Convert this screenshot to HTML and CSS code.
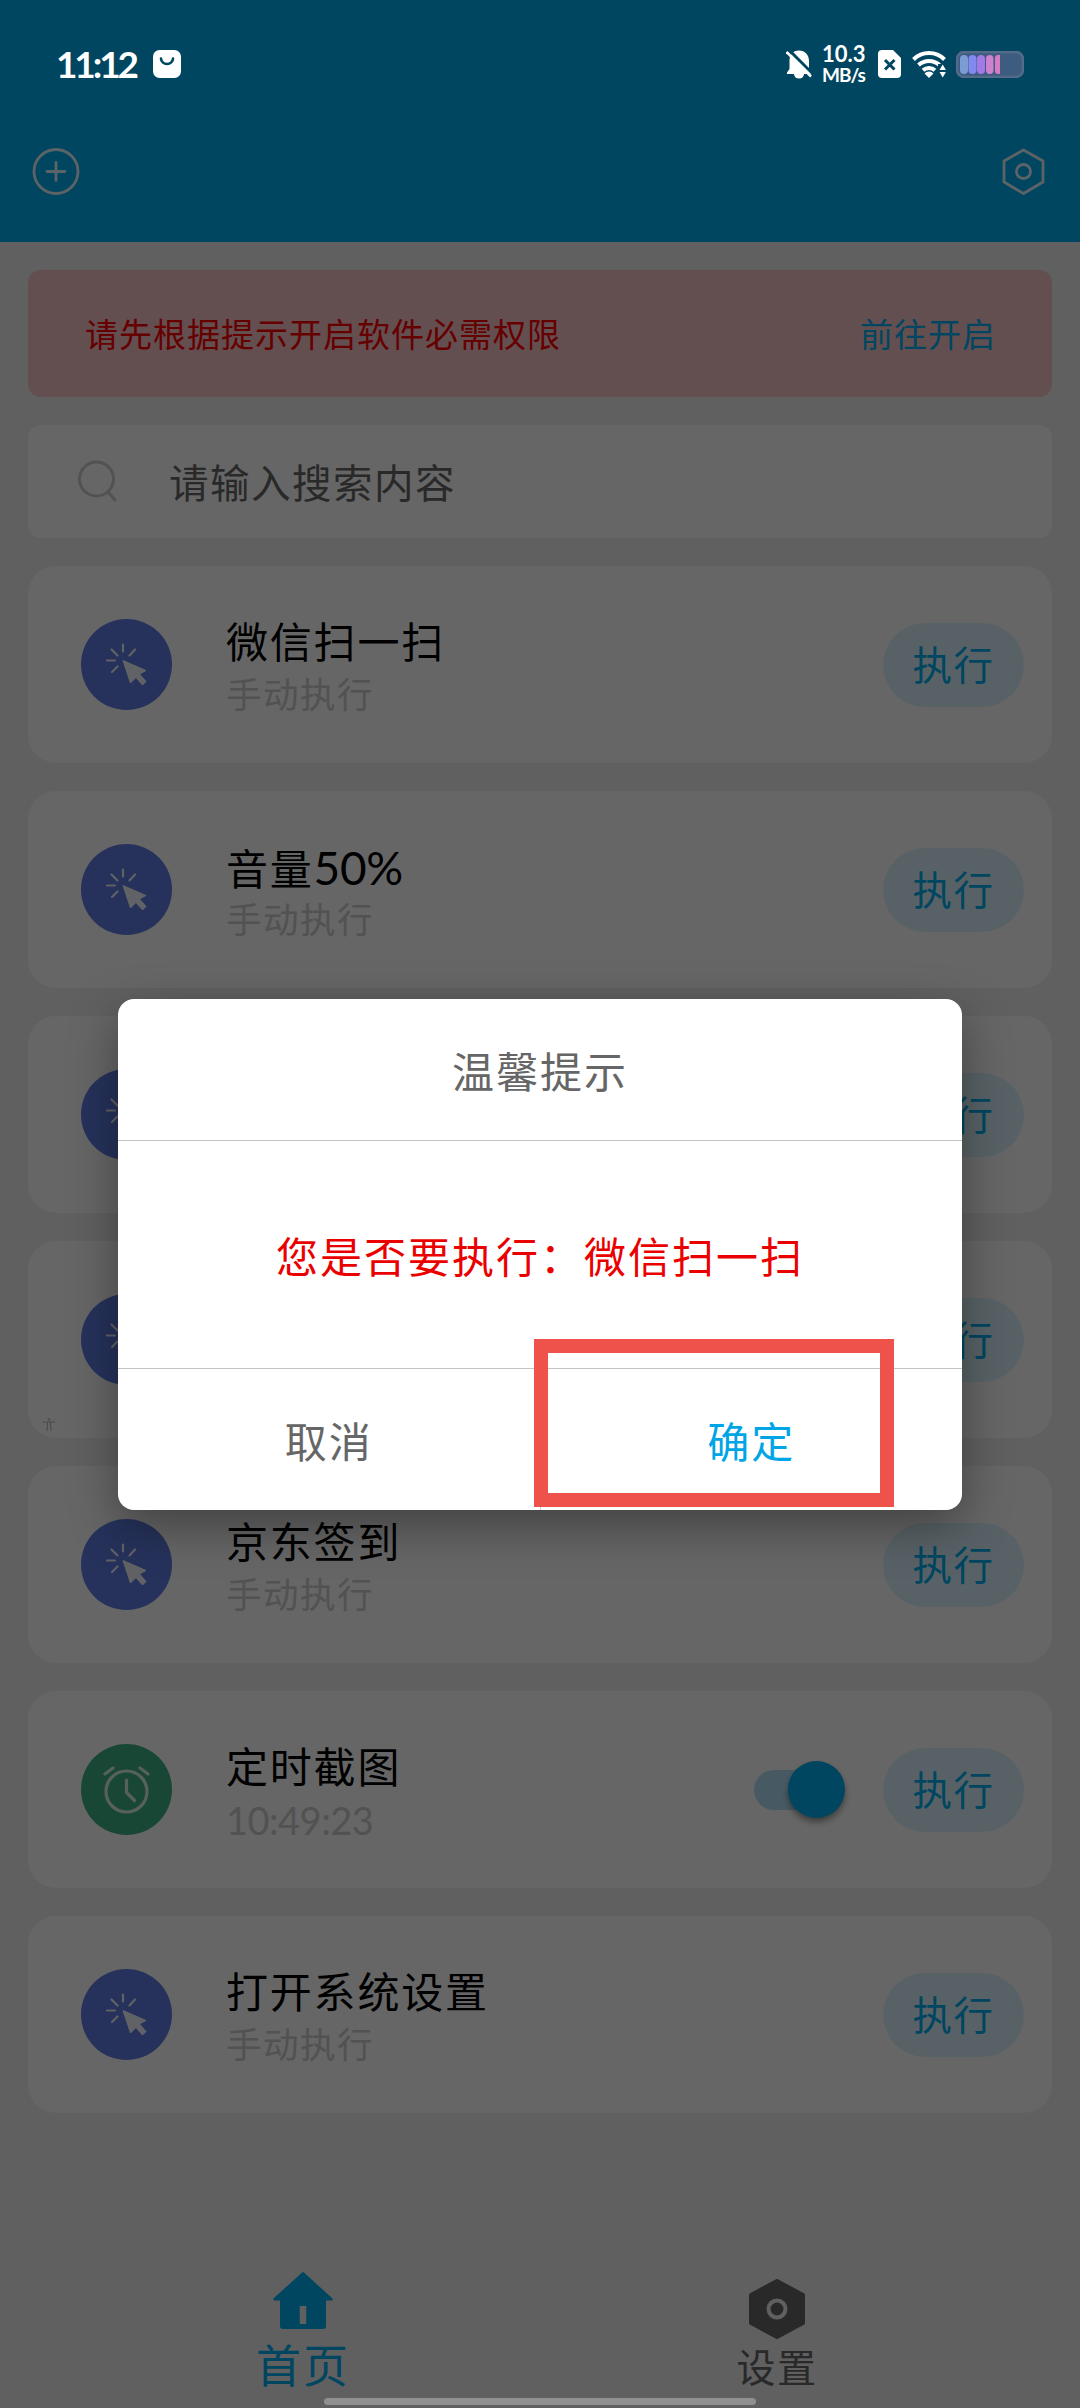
FILE: index.html
```html
<!DOCTYPE html>
<html lang="zh-CN">
<head>
<meta charset="utf-8">
<title>首页</title>
<link rel="stylesheet" href="styles.css">
</head>
<body>
<svg width="0" height="0" class="defs">
  <symbol id="click" viewBox="0 0 91 91">
    <circle cx="45.500" cy="45.500" r="45.500" fill="#5f7de4"/>
    <g stroke="#fff" stroke-opacity=".9" stroke-width="2.200" stroke-linecap="round">
      <path d="M42 25.500v7M30.500 30.500l6 6M54 30.500l-5.500 6M26 41.500h8M36.500 47.500l-5.500 5.500"/>
    </g>
    <path d="M42 41.500L65 51.500 58.500 55 65 62.500 61.500 66 55 58.500 49.500 64z" fill="#fff" fill-opacity=".92" stroke="#fff" stroke-opacity=".9" stroke-width="1" stroke-linejoin="round"/>
  </symbol>
</svg>
<div class="screen">
  <header class="top">
    <svg width="48" height="48" viewBox="0 0 48 48" fill="none" stroke="#fff" stroke-opacity=".9" stroke-width="2.800" stroke-linecap="round"><circle cx="24" cy="24.500" r="22"/><path d="M24 15.500v18M15 24.500h18"/></svg>
    <svg width="48" height="48" viewBox="0 0 48 48" fill="none" stroke="#fff" stroke-opacity=".9" stroke-width="2.800" stroke-linejoin="round"><path d="M23.500 3L43 14V35L23.500 46.500 4 35V14z"/><circle cx="23.500" cy="24.500" r="7"/></svg>
  </header>
  <main class="content">
    <div class="banner"><span class="warn">请先根据提示开启软件必需权限</span><a class="go">前往开启</a></div>
    <div class="search">
      <svg width="44" height="44" viewBox="0 0 44 44" fill="none" stroke="#ccc" stroke-width="3" stroke-linecap="round"><circle cx="20.500" cy="20" r="17"/><path d="M32 33l7 8"/></svg>
      <span>请输入搜索内容</span>
    </div>
    <div class="card"><svg class="ico"><use href="#click"/></svg><div class="txt"><b>微信扫一扫</b><i>手动执行</i></div><span class="run">执行</span></div>
    <div class="card"><svg class="ico"><use href="#click"/></svg><div class="txt"><b>音量<span class="num">50%</span></b><i>手动执行</i></div><span class="run">执行</span></div>
    <div class="card"><svg class="ico"><use href="#click"/></svg><div class="txt"></div><span class="run">执行</span></div>
    <div class="card"><svg class="ico"><use href="#click"/></svg><div class="txt"></div><span class="run">执行</span></div>
    <div class="card"><svg class="ico"><use href="#click"/></svg><div class="txt"><b>京东签到</b><i>手动执行</i></div><span class="run">执行</span></div>
    <div class="card">
      <svg class="ico" viewBox="0 0 91 91"><circle cx="45.500" cy="45.500" r="45.500" fill="#40b284"/><g fill="none" stroke="#fff" stroke-opacity=".8" stroke-width="3.200" stroke-linecap="round" stroke-linejoin="round"><circle cx="45.500" cy="47.500" r="20.500"/><path d="M45.500 36v12.500l8 8M24 30l8-6M67 30l-8-6"/></g></svg>
      <div class="txt"><b>定时截图</b><i class="time">10:49:23</i></div>
      <span class="switch"><span class="thumb"></span></span>
      <span class="run">执行</span>
    </div>
    <div class="card"><svg class="ico"><use href="#click"/></svg><div class="txt"><b>打开系统设置</b><i>手动执行</i></div><span class="run">执行</span></div>
  </main>
  <nav class="tabs">
    <div class="tab home">
      <svg width="60" height="58" viewBox="0 0 60 58"><path d="M30 0Q31 0 32 1.500L59 26Q61 28.500 58 28.500H53V54Q53 57 50 57H10Q7 57 7 54V28.500H2Q-1 28.500 1 26L28 1.500Q29 0 30 0z" fill="#00aeef"/><path d="M30 34v18" stroke="#f0f0f0" stroke-width="6.500"/></svg>
      <span>首页</span>
    </div>
    <div class="tab set">
      <svg width="58" height="62" viewBox="0 0 58 62"><path d="M29 3L55 17V45L29 59 3 45V17z" fill="#666" stroke="#666" stroke-width="4" stroke-linejoin="round"/><circle cx="29" cy="31" r="8.500" fill="none" stroke="#f0f0f0" stroke-width="4"/></svg>
      <span>设置</span>
    </div>
  </nav>
</div>
<div class="scrim">
  <section class="dialog">
    <h2>温馨提示</h2>
    <p>您是否要执行：微信扫一扫</p>
    <div class="actions"><span class="cancel">取消</span><span class="ok">确定</span></div>
  </section>
</div>
<div class="mark"></div>
<svg class="person" width="12" height="14" viewBox="0 0 12 14" fill="none" stroke="#484848" stroke-width="1"><circle cx="6" cy="1.500" r=".8"/><path d="M0 4h12M4.500 4.500L4 13M7.500 4.500L8 13"/></svg>
<div class="status">
  <span class="clock">11:12</span>
  <svg class="bag" width="28" height="28" viewBox="0 0 28 28"><rect width="28" height="28" rx="6.500" fill="#fff"/><path d="M8 8.500a6 5.500 0 0 0 12 0" fill="none" stroke="#004660" stroke-width="2.600" stroke-linecap="round"/></svg>
  <svg class="bell" width="26" height="29" viewBox="0 0 26 29"><path d="M13 .5C19 .5 23 5 23 11v8l2 3.500V24H1v-1.500L3.500 19v-8C3.500 5 7 .5 13 .5z" fill="#fff"/><path d="M8 24a5 4.500 0 0 0 10 0z" fill="#fff"/><path d="M2 -1L28 25" stroke="#004660" stroke-width="3"/><path d="M.5 2L25 26.500" stroke="#fff" stroke-width="2.500"/></svg>
  <span class="speed"><span>10.3</span><span>MB/s</span></span>
  <svg class="sim" width="23" height="28" viewBox="0 0 23 28"><path d="M4 0H15L23 8V24a4 4 0 0 1-4 4H4a4 4 0 0 1-4-4V4a4 4 0 0 1 4-4z" fill="#fff"/><path d="M7 10l9.500 9.500M16.500 10L7 19.500" stroke="#004660" stroke-width="3"/></svg>
  <svg class="wifi" width="35" height="28" viewBox="0 0 35 28" fill="none" stroke="#fff" stroke-width="4"><path d="M1.500 9.500a22 22 0 0 1 31 0M6.500 15a15.500 15.500 0 0 1 21 0M11 20.200a9 9 0 0 1 12 0"/><path d="M12.500 23.500a6 6 0 0 1 9 0L17 28z" fill="#fff" stroke="none"/><path d="M26 14h9v14h-9z" fill="#004660" stroke="none"/><path d="M27.500 20l3.200-5.500 3.200 5.500zM27.500 22h6.400l-3.200 5.500z" fill="#fff" stroke="none"/></svg>
  <svg class="battery" width="68" height="27" viewBox="0 0 68 27"><rect x="1" y="1" width="66" height="25" rx="7" fill="#3d5c80" stroke="#546b89" stroke-width="2.500"/><rect x="4" y="4" width="8" height="19" rx="4" fill="#7c9cd6"/><rect x="12.500" y="4" width="8" height="19" rx="4" fill="#8289ef"/><rect x="21" y="4" width="8" height="19" rx="4" fill="#a379e8"/><rect x="30" y="4" width="7.500" height="19" rx="3.700" fill="#cc82ce"/><path d="M44 4h-2a3 3 0 0 0-3 3v13a3 3 0 0 0 3 3h2z" fill="#d97bc0"/></svg>
</div>
<div class="gesture"></div>
</body>
</html>
```
FILE: styles.css
```css
* { box-sizing: border-box; margin: 0; padding: 0; }
body {
  position: relative;
  width: 1080px;
  height: 2408px;
  overflow: hidden;
  background: #f0f0f0;
  font-family: Lato, "Noto Sans CJK SC", sans-serif;
}
.defs { position: absolute; }
.screen { display: flex; flex-direction: column; height: 2408px; }
.top {
  flex: none;
  height: 242px;
  padding: 147px 32px 0;
  display: flex;
  justify-content: space-between;
  background: #00aeef;
}
.content { flex: 1; display: flex; flex-direction: column; gap: 28px; padding: 28px; }
.banner {
  flex: none;
  height: 127px;
  padding: 0 57px;
  display: flex;
  align-items: center;
  justify-content: space-between;
  border-radius: 13px;
  background: #f8c2c8;
  font-size: 33px;
  line-height: 50px;
}
.warn { color: #ff0000; letter-spacing: 1px; }
.go { color: #00aeef; letter-spacing: 1px; margin-right: -1px; }
.search {
  flex: none;
  height: 113px;
  padding: 0 0 2px 48px;
  display: flex;
  align-items: center;
  gap: 49px;
  border-radius: 13px;
  background: #fff;
  color: #666;
  font-size: 39.5px;
  letter-spacing: 1.5px;
}
.card {
  flex: none;
  height: 197px;
  padding: 0 28px 0 53px;
  display: flex;
  align-items: center;
  border-radius: 28px;
  background: #fff;
}
.ico { flex: none; width: 91px; height: 91px; }
.txt { flex: 1; padding: 6px 0 0 54px; display: flex; flex-direction: column; }
.txt b { height: 55px; font-weight: 400; font-size: 42px; line-height: 55px; letter-spacing: 1.8px; color: #000; }
.txt i { height: 50px; font-style: normal; font-size: 35.5px; line-height: 50px; letter-spacing: 1.5px; color: #ccc; }
.txt .time { font-size: 38px; letter-spacing: -0.5px; }
.num { font-size: 46px; letter-spacing: -0.3px; }
.run {
  width: 141px;
  height: 84px;
  border-radius: 42px;
  background: #dcf5ff;
  color: #00aeef;
  font-size: 39.5px;
  line-height: 83px;
  letter-spacing: 1.5px;
  text-align: center;
}
.switch {
  width: 84px;
  height: 40px;
  margin-right: 45px;
  display: flex;
  align-items: center;
  justify-content: flex-end;
  border-radius: 20px;
  background: #b2e1f8;
}
.thumb {
  flex: none;
  width: 57px;
  height: 57px;
  margin-right: -7px;
  border-radius: 50%;
  background: #00aeef;
  box-shadow: 0 4px 6px rgba(0,0,0,.4);
}
.tabs {
  flex: none;
  height: 156px;
  padding: 0 66px;
  display: flex;
  border-top: 1px solid #ececec;
}
.tab { flex: 1; display: flex; flex-direction: column; align-items: center; color: #666; }
.home { padding-top: 19px; color: #00aeef; font-size: 45px; line-height: 72px; letter-spacing: 2px; }
.set { padding-top: 25px; font-size: 39px; line-height: 54px; letter-spacing: 1.5px; }
.scrim {
  position: absolute;
  inset: 0;
  padding: 999px 118px 0;
  background: rgba(0,0,0,.6);
}
.dialog {
  height: 511px;
  border-radius: 16px;
  overflow: hidden;
  display: flex;
  flex-direction: column;
  background: #fff;
  box-shadow: 0 16px 48px rgba(0,0,0,.36);
  font-size: 42px;
  letter-spacing: 2px;
  text-align: center;
  color: #666;
}
.dialog h2 { height: 142px; line-height: 146px; font-size: 42px; font-weight: 400; border-bottom: 1px solid #c4c4c4; }
.dialog p { height: 228px; line-height: 232px; color: #eb0000; border-bottom: 1px solid #c4c4c4; }
.actions { flex: 1; display: flex; line-height: 146px; }
.actions span { flex: 1; }
.cancel { border-right: 1px solid #ccc; }
.ok { color: #00a5e6; }
.mark {
  position: absolute;
  left: 534px;
  top: 1339px;
  width: 360px;
  height: 168px;
  border: 14px solid #ef514b;
}
.person { position: absolute; left: 43px; top: 1418px; }
.status {
  position: absolute;
  inset: 0 0 auto 0;
  height: 128px;
  padding: 0 56px;
  display: flex;
  align-items: center;
  color: #fff;
  font-weight: 700;
}
.clock { width: 97px; font-size: 37px; line-height: 44px; letter-spacing: -3.1px; }
.bell { margin-left: auto; margin-right: 10px; }
.speed { width: 43px; margin-right: 13px; display: flex; flex-direction: column; font-size: 22px; line-height: 21px; }
.speed span + span { font-size: 19px; letter-spacing: -1px; }
.sim { margin-right: 11px; }
.wifi { margin-right: 9px; }
.gesture {
  position: absolute;
  left: 324px;
  top: 2398px;
  width: 432px;
  height: 7px;
  border-radius: 4px;
  background: #909090;
}
```
